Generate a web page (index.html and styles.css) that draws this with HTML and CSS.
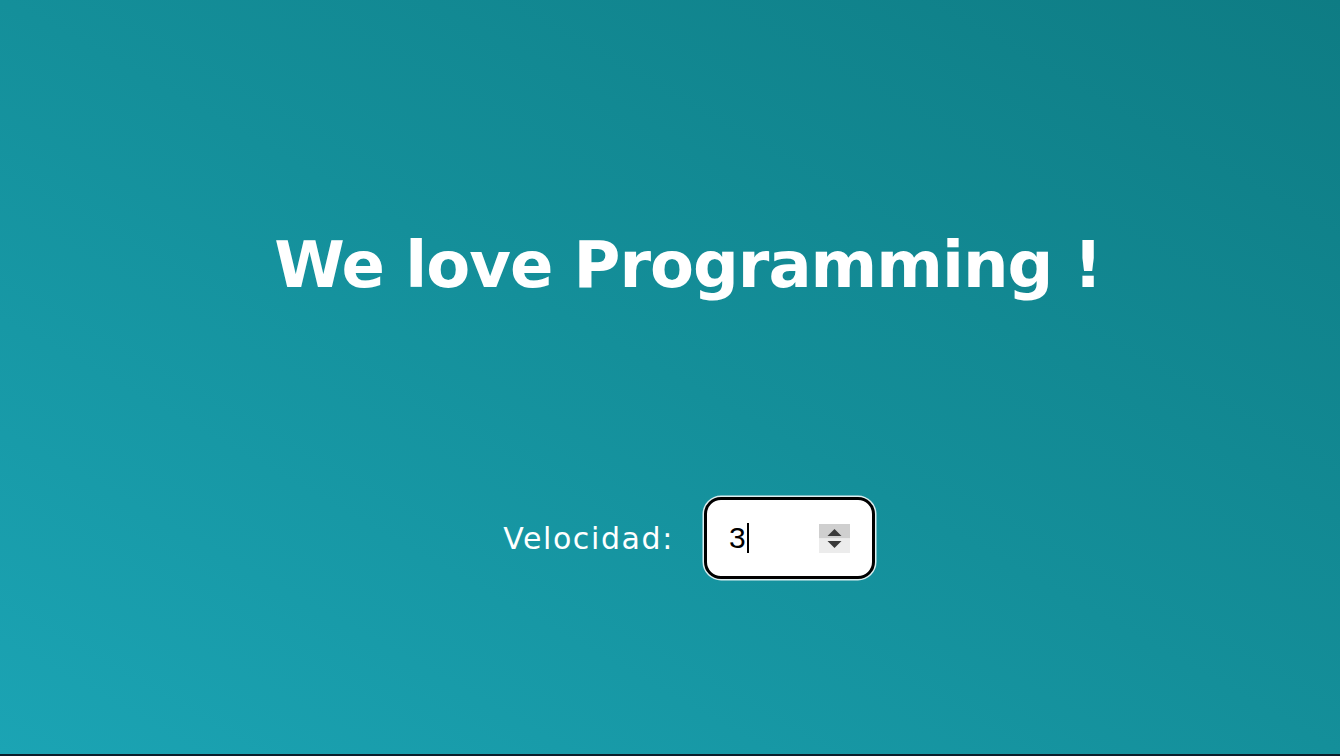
FILE: index.html
```html
<!DOCTYPE html>
<html lang="es">
<head>
<meta charset="utf-8">
<title>We love Programming</title>
<link rel="stylesheet" href="styles.css">
</head>
<body>
<main class="page">
  <h1 class="title">We love Programming !</h1>
  <div class="control">
    <label class="label" for="speed">Velocidad:</label>
    <div class="field" id="speed">
      <span class="value">3</span><span class="caret"></span>
      <span class="spinner">
        <svg width="31" height="29" viewBox="0 0 31 29">
          <rect x="0" y="0" width="31" height="14.5" fill="#cfcfcf"/>
          <rect x="0" y="14.5" width="31" height="14.5" fill="#ececec"/>
          <polygon points="8.5,12 15.5,5 22.5,12" fill="#3a3a3a"/>
          <polygon points="8.5,17 22.5,17 15.5,24" fill="#3a3a3a"/>
        </svg>
      </span>
    </div>
  </div>
</main>
</body>
</html>
```

FILE: styles.css
```css
html, body {
  margin: 0;
  padding: 0;
  background: #0b1e2a;
}
.page {
  box-sizing: border-box;
  height: 754px;
  background: linear-gradient(to top right, #1ba4b4 0%, #148f9a 50%, #0e7c84 100%);
  display: flex;
  flex-direction: column;
  align-items: center;
  padding: 220px 0 0 36px;
}
.title {
  margin: 0;
  font-family: "DejaVu Sans", sans-serif;
  font-weight: bold;
  font-size: 64px;
  line-height: 90px;
  color: #ffffff;
  letter-spacing: -1px;
}
.control {
  margin-top: 187px;
  display: flex;
  align-items: center;
  gap: 30px;
  padding-left: 2px;
}
.label {
  font-family: "DejaVu Sans", sans-serif;
  font-size: 30px;
  letter-spacing: 1.6px;
  color: #ffffff;
}
.field {
  box-sizing: border-box;
  width: 171px;
  height: 82px;
  border: 3px solid #000;
  border-radius: 17px;
  background: #fff;
  box-shadow: 0 0 0 1.5px rgba(255,255,255,0.85);
  display: flex;
  align-items: center;
  padding: 0 22px 0 22px;
}
.value {
  font-family: "Liberation Sans", Arial, sans-serif;
  font-size: 30px;
  color: #000;
}
.caret {
  width: 2px;
  height: 30px;
  background: #000;
  margin-left: 1px;
}
.spinner {
  margin-left: auto;
  display: flex;
}
```
